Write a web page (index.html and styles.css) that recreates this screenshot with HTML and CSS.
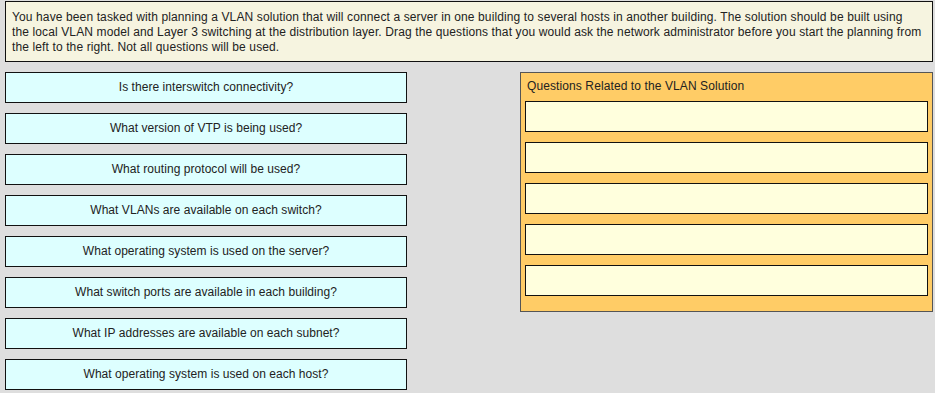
FILE: index.html
```html
<!DOCTYPE html>
<html>
<head>
<meta charset="utf-8">
<link rel="stylesheet" href="styles.css">
</head>
<body>
<div class="page">
  <div class="intro">You have been tasked with planning a VLAN solution that will connect a server in one building to several hosts in another building. The solution should be built using<br>the local VLAN model and Layer 3 switching at the distribution layer. Drag the questions that you would ask the network administrator before you start the planning from<br>the left to the right. Not all questions will be used.</div>
  <div class="main">
    <div class="questions">
      <div class="q">Is there interswitch connectivity?</div>
      <div class="q">What version of VTP is being used?</div>
      <div class="q">What routing protocol will be used?</div>
      <div class="q">What VLANs are available on each switch?</div>
      <div class="q">What operating system is used on the server?</div>
      <div class="q">What switch ports are available in each building?</div>
      <div class="q">What IP addresses are available on each subnet?</div>
      <div class="q">What operating system is used on each host?</div>
    </div>
    <div class="panel">
      <div class="panel-title">Questions Related to the VLAN Solution</div>
      <div class="slots">
        <div class="slot"></div>
        <div class="slot"></div>
        <div class="slot"></div>
        <div class="slot"></div>
        <div class="slot"></div>
      </div>
    </div>
  </div>
</div>
</body>
</html>
```
FILE: styles.css
```css
html, body {
  margin: 0;
  padding: 0;
  background: #dedede;
}
body {
  font-family: "Liberation Sans", Arial, sans-serif;
  font-size: 12px;
  color: #222;
}
.page {
  padding: 1px 2px 0 5px;
}
.intro {
  box-sizing: border-box;
  width: 928px;
  height: 61px;
  background: #f6f4e0;
  border: 1px solid #111;
  padding: 8px 4px 0 6px;
  line-height: 15px;
  letter-spacing: 0.12px;
  white-space: nowrap;
}
.main {
  display: flex;
  align-items: flex-start;
  margin-top: 10px;
}
.questions {
  display: flex;
  flex-direction: column;
  gap: 10px;
  width: 402px;
}
.q {
  box-sizing: border-box;
  height: 31px;
  background: #ddffff;
  border: 1px solid #111;
  display: flex;
  align-items: center;
  justify-content: center;
  padding-bottom: 1px;
  letter-spacing: 0.05px;
}
.panel {
  box-sizing: border-box;
  margin-left: 113px;
  width: 413px;
  height: 240px;
  background: #ffcc66;
  border: 1px solid #555;
  padding: 0 4px;
}
.panel-title {
  height: 28px;
  line-height: 27px;
  padding-left: 2px;
  box-sizing: border-box;
  letter-spacing: 0.1px;
}
.slots {
  display: flex;
  flex-direction: column;
  gap: 10px;
}
.slot {
  box-sizing: border-box;
  height: 31px;
  background: #ffffdd;
  border: 1px solid #111;
}
```
